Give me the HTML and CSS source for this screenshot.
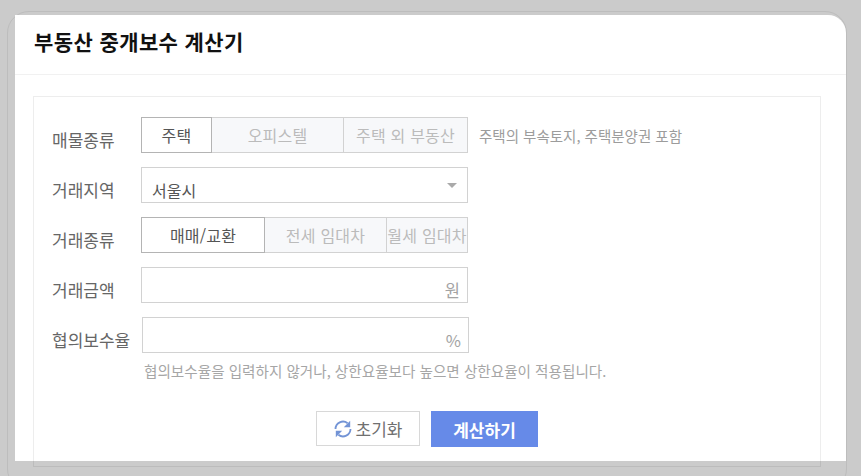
FILE: index.html
```html
<!DOCTYPE html>
<html lang="ko">
<head>
<meta charset="utf-8">
<title>부동산 중개보수 계산기</title>
<link rel="stylesheet" href="styles.css">
</head>
<body>
<div class="frame"></div>
<main class="modal">
  <header class="modal-head"><h1>부동산 중개보수 계산기</h1></header>
  <section class="card">
    <form class="form">
      <div class="row row-a">
        <span class="label">매물종류</span>
        <div class="seg seg-type">
          <span class="opt on">주택</span>
          <span class="opt">오피스텔</span>
          <span class="opt">주택 외 부동산</span>
        </div>
        <span class="note">주택의 부속토지, 주택분양권 포함</span>
      </div>
      <div class="row">
        <span class="label">거래지역</span>
        <div class="field select">서울시<i class="caret"></i></div>
      </div>
      <div class="row">
        <span class="label">거래종류</span>
        <div class="seg seg-deal">
          <span class="opt on">매매/교환</span>
          <span class="opt">전세 임대차</span>
          <span class="opt">월세 임대차</span>
        </div>
      </div>
      <div class="row">
        <span class="label">거래금액</span>
        <div class="field amount">원</div>
      </div>
      <div class="row row-rate">
        <span class="label">협의보수율</span>
        <div class="field amount">%</div>
      </div>
      <p class="hint">협의보수율을 입력하지 않거나, 상한요율보다 높으면 상한요율이 적용됩니다.</p>
      <div class="actions">
        <button type="button" class="btn btn-reset">
          <svg class="ico" width="18" height="18" viewBox="0 0 18 18" fill="none" stroke="#7394d6" stroke-width="1.8">
            <path d="M1.5 9A7.5 7.5 0 0 1 13.6 3.2"/>
            <path d="M16.2 .8v6.4h-6.4z" fill="#7394d6" stroke="none"/>
            <path d="M16.5 9A7.5 7.5 0 0 1 4.4 14.8"/>
            <path d="M1.8 17.2v-6.4h6.4z" fill="#7394d6" stroke="none"/>
          </svg>초기화</button>
        <button type="button" class="btn btn-calc">계산하기</button>
      </div>
    </form>
  </section>
</main>
</body>
</html>
```
FILE: styles.css
```css
* { box-sizing: border-box; }
html, body { margin: 0; height: 476px; overflow: hidden; }
body {
  position: relative;
  background: #cbcbcb;
  font-family: "Noto Sans CJK KR", "Liberation Sans", sans-serif;
  color: #555;
  font-size: 16px;
  padding: 15px 15px 0;
}
.frame {
  position: absolute;
  left: 7px; top: 11px;
  width: 840px; height: 480px;
  border: 1px solid #bdbdbd;
  border-radius: 22px;
}
.modal {
  position: relative;
  width: 831px;
  height: 446px;
  background: #fff;
  border-top-right-radius: 18px;
}
.modal-head {
  height: 60px;
  padding: 11px 19px 0;
  border-bottom: 1px solid #f1f1f1;
}
.modal-head h1 {
  margin: 0;
  font-size: 21px;
  line-height: 30px;
  font-weight: 700;
  color: #111;
  letter-spacing: 0.4px;
}
.card {
  margin: 21px 0 0 18px;
  width: 788px;
  height: 371px;
  border: 1px solid rgba(0, 0, 0, 0.07);
}
.form { padding: 20px 0 0 18px; }
.row { display: flex; align-items: flex-start; height: 36px; margin-bottom: 14px; }
.label { width: 89px; flex: none; font-size: 17px; line-height: 36px; padding-top: 5px; white-space: nowrap; color: #666; }
.seg { display: flex; width: 327px; height: 36px; border: 1px solid #d2d2d2; background: #f7f8fa; }
.opt { text-align: center; line-height: 34px; color: #bbb; border-left: 1px solid #d2d2d2; white-space: nowrap; overflow: hidden; letter-spacing: 0.2px; }
.opt:first-child { border-left: 0; }
.opt.on { background: #fff; color: #555; outline: 1px solid #b4b4b4; position: relative; }
.seg-type .opt:nth-child(1) { width: 69px; }
.seg-type .opt:nth-child(2) { width: 132px; }
.seg-type .opt:nth-child(3) { width: 124px; }
.seg-deal .opt:nth-child(1) { width: 122px; }
.seg-deal .opt:nth-child(2) { width: 122px; }
.seg-deal .opt:nth-child(3) { width: 81px; }
.note { margin-left: 11px; font-size: 14.5px; line-height: 36px; padding-top: 1px; color: #9c9c9c; }
.field { position: relative; width: 327px; height: 36px; border: 1px solid #d2d2d2; background: #fff; }
.select { padding: 7px 0 0 10px; line-height: 30px; font-size: 16px; color: #555; }
.caret {
  position: absolute; right: 10px; top: 15px;
  width: 0; height: 0;
  border: 4px solid transparent; border-top: 5px solid #aaa; border-bottom: 0;
  border-left-width: 5px; border-right-width: 5px;
}
.amount { text-align: right; padding: 7px 7px 0 0; line-height: 30px; font-size: 16.5px; color: #a3a3a3; }
.row-rate { margin-bottom: 0; }
.row-rate .label { width: 90px; }
.hint { margin: 6px 0 0 92px; font-size: 14.6px; line-height: 24px; color: #a6a6a6; white-space: nowrap; }
.actions { display: flex; justify-content: center; align-items: flex-start; gap: 11px; margin: 28px 0 0 -18px; width: 786px; }
.btn { height: 36px; font: inherit; font-size: 17px; cursor: pointer; display: flex; align-items: center; justify-content: center; padding: 0; }
.btn-reset { width: 104px; height: 35px; border: 1px solid #d8d8d8; background: #fff; color: #707070; gap: 4px; }
.btn-calc { width: 107px; border: 0; background: #668ae8; color: #fff; font-weight: 700; }
```
